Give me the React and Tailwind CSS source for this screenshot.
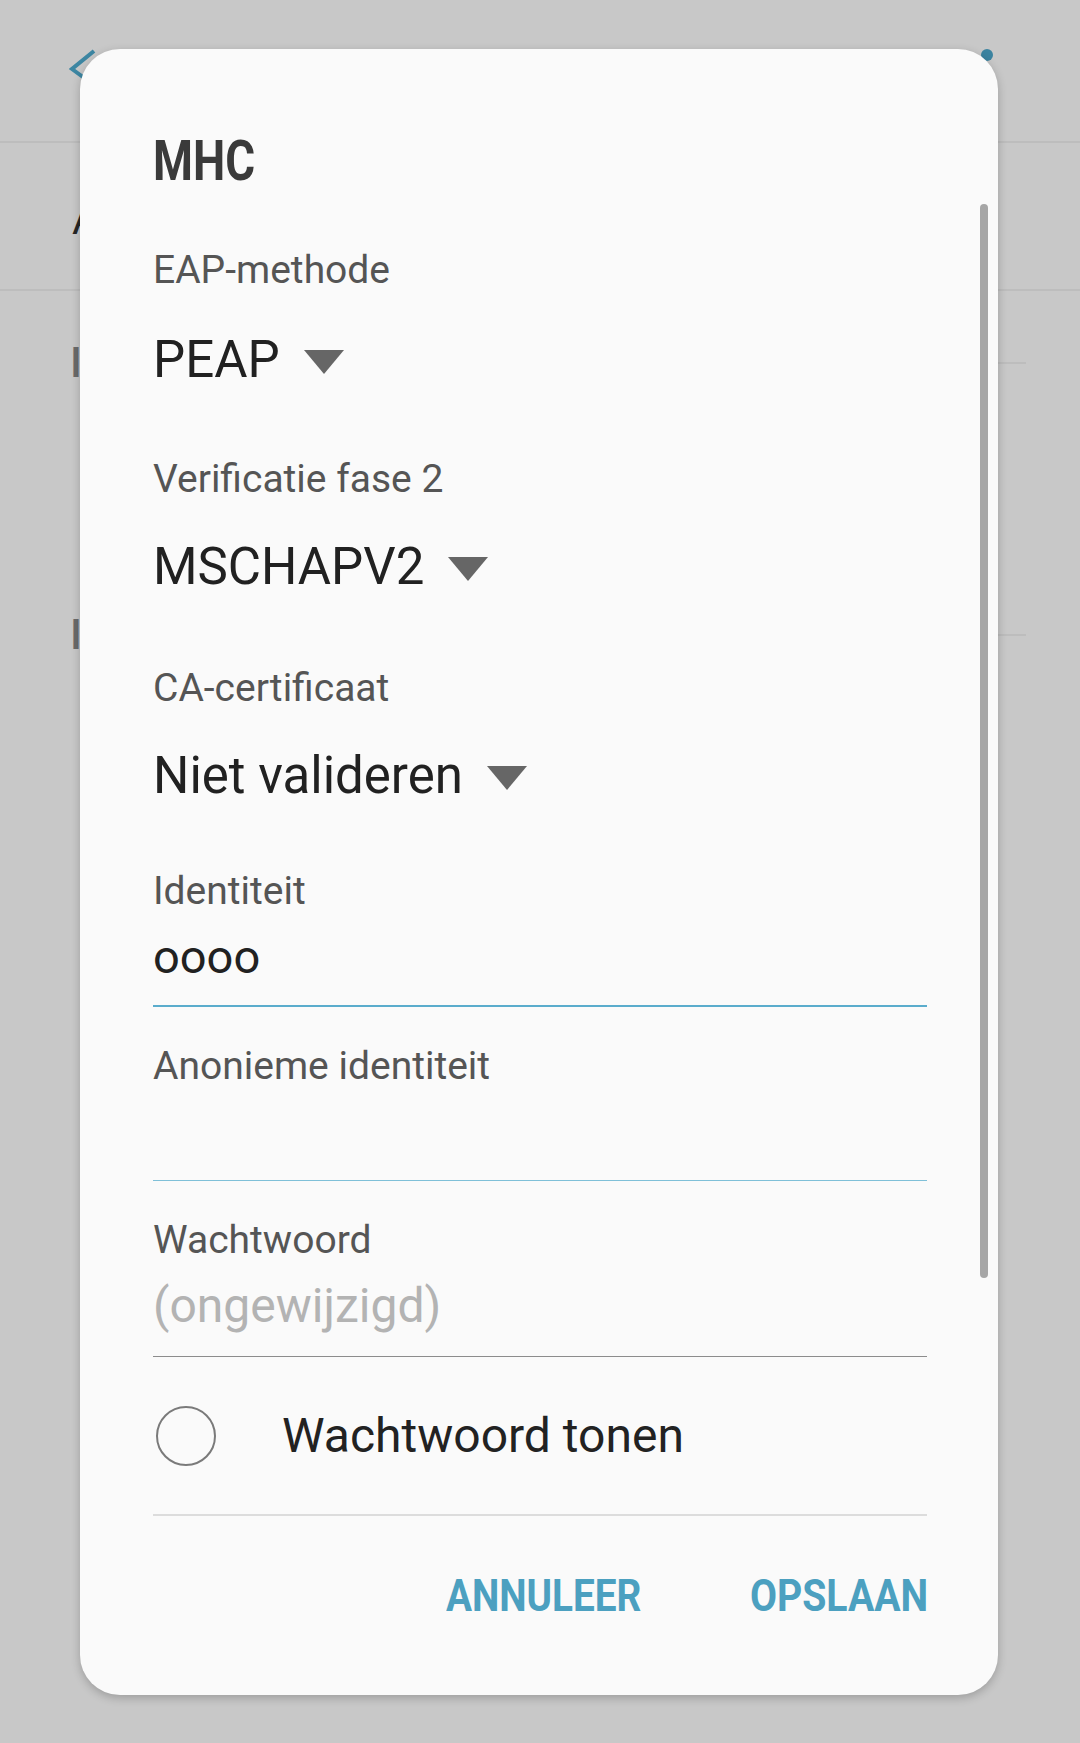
import React from "react";

const FONT = "font-['Roboto','Liberation_Sans',sans-serif]";

function Arrow() {
  return (
    <svg width="40" height="24" viewBox="0 0 40 24" className="ml-[24px] mt-[4px] shrink-0">
      <polygon points="0,0 40,0 20,24" fill="#666666" />
    </svg>
  );
}

function Label({ children, className = "" }) {
  return <div className={`text-[39px] leading-none text-[#555555] ${className}`}>{children}</div>;
}

function Dropdown({ value, className = "" }) {
  return (
    <div className={`flex items-center ${className}`}>
      <span className="text-[51px] leading-none text-[#212121] whitespace-nowrap">{value}</span>
      <Arrow />
    </div>
  );
}

function SectionHeader({ label, className = "" }) {
  return (
    <div className={`flex items-center pl-[70px] pr-[54px] ${className}`}>
      <span className="text-[42px] leading-none font-medium text-[#6a6a6a] whitespace-nowrap">{label}</span>
      <div className="flex-1 ml-4 h-[2px] bg-[#bdbdbd]" />
    </div>
  );
}

export default function App() {
  return (
    <div className={`relative w-[1080px] h-[1743px] overflow-hidden bg-[#c8c8c8] ${FONT}`}>
      {/* page behind the dialog */}
      <div className="flex justify-between items-start h-[143px] pt-[49px] pl-[68px] pr-[87px] border-b-2 border-[#bdbdbd]">
        <svg width="28" height="36" viewBox="0 0 28 36">
          <polyline points="26,2 4,20 26,36" fill="none" stroke="#3d86a2" strokeWidth="4" />
        </svg>
        <div className="w-[12px] h-[12px] rounded-full bg-[#3b83a0]" />
      </div>
      <div className="h-[148px] pt-[56px] pl-[72px] border-b-2 border-[#bdbdbd]">
        <span className="text-[42px] leading-none text-[#262626]">Auto</span>
      </div>
      <SectionHeader label="IP" className="mt-[51px]" />
      <SectionHeader label="IP" className="mt-[230px]" />

      {/* dialog */}
      <div className="absolute left-[80px] top-[49px] w-[918px] h-[1646px] rounded-[40px] bg-[#fafafa] shadow-[0_3px_10px_rgba(0,0,0,0.22)] pl-[73px] pr-[71px] flex flex-col">
        <div className="mt-[85px] text-[55px] leading-none font-bold text-[#3a3a3a]">
          <span className="inline-block origin-left scale-x-[0.83]">MHC</span>
        </div>

        <Label className="mt-[62px]">EAP-methode</Label>
        <Dropdown value="PEAP" className="mt-[44px]" />

        <Label className="mt-[75px]">Verificatie fase 2</Label>
        <Dropdown value="MSCHAPV2" className="mt-[42px]" />

        <Label className="mt-[77px]">CA-certificaat</Label>
        <Dropdown value="Niet valideren" className="mt-[42px]" />

        <Label className="mt-[71px]">Identiteit</Label>
        <div className="mt-[22px] h-[47px] text-[47px] leading-none text-[#212121]">oooo</div>
        <div className="mt-[25px] h-[2px] bg-[#5aaccc]" />

        <Label className="mt-[40px]">Anonieme identiteit</Label>
        <div className="mt-[22px] h-[47px]" />
        <div className="mt-[25px] h-px bg-[#7fc0d8]" />

        <Label className="mt-[40px]">Wachtwoord</Label>
        <div className="mt-[22px] h-[48px] text-[48px] leading-none text-[#b3b3b3]">(ongewijzigd)</div>
        <div className="mt-[26px] h-px bg-[#8c8c8c]" />

        <div className="h-[157px] flex items-center">
          <div className="ml-[3px] w-[60px] h-[60px] rounded-full border-2 border-[#7a7a7a] shrink-0" />
          <span className="ml-[66px] text-[48px] leading-none text-[#222222]">Wachtwoord tonen</span>
        </div>
        <div className="h-[2px] bg-[#dcdcdc]" />

        <div className="mt-[57px] flex justify-end gap-[110px] text-[45px] leading-none font-bold text-[#4ca0c0]">
          <div className="w-[194px] whitespace-nowrap">
            <span className="inline-block origin-left scale-x-[0.86]">ANNULEER</span>
          </div>
          <div className="w-[177px] whitespace-nowrap">
            <span className="inline-block origin-left scale-x-[0.87]">OPSLAAN</span>
          </div>
        </div>

        {/* scroll indicator */}
        <div className="absolute right-[10px] top-[155px] w-[8px] h-[1074px] rounded-full bg-[#a6a6a6]" />
      </div>
    </div>
  );
}
